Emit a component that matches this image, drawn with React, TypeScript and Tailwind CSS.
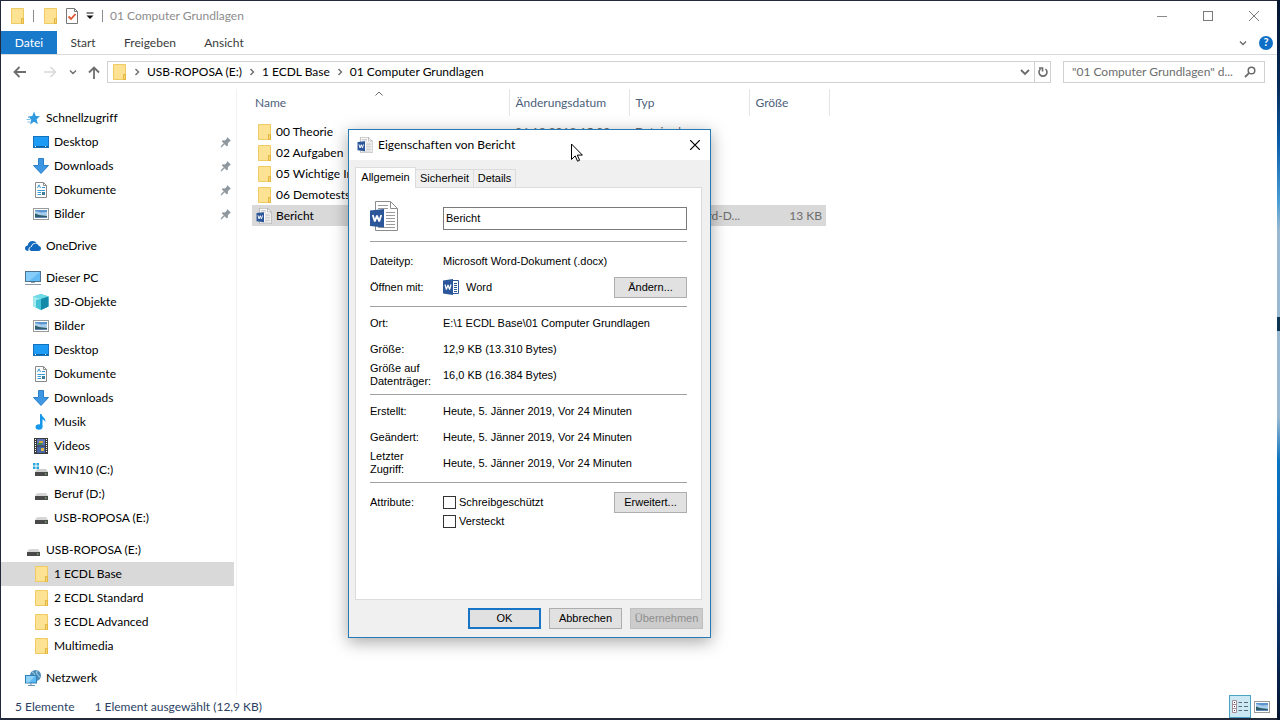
import { useState, type ReactNode } from 'react';

type IconName =
  | 'star' | 'desktop' | 'download' | 'document' | 'picture' | 'onedrive' | 'pc'
  | 'cube' | 'music' | 'video' | 'sysdrive' | 'drive' | 'folder' | 'network';

interface TreeItem {
  label: string;
  icon: IconName;
  child?: boolean;
  pinned?: boolean;
}

interface FileRow {
  name: string;
  date: string;
  type: string;
  size?: string;
  word?: boolean;
}

const treeGroups: TreeItem[][] = [
  [
    { label: 'Schnellzugriff', icon: 'star' },
    { label: 'Desktop', icon: 'desktop', child: true, pinned: true },
    { label: 'Downloads', icon: 'download', child: true, pinned: true },
    { label: 'Dokumente', icon: 'document', child: true, pinned: true },
    { label: 'Bilder', icon: 'picture', child: true, pinned: true },
  ],
  [{ label: 'OneDrive', icon: 'onedrive' }],
  [
    { label: 'Dieser PC', icon: 'pc' },
    { label: '3D-Objekte', icon: 'cube', child: true },
    { label: 'Bilder', icon: 'picture', child: true },
    { label: 'Desktop', icon: 'desktop', child: true },
    { label: 'Dokumente', icon: 'document', child: true },
    { label: 'Downloads', icon: 'download', child: true },
    { label: 'Musik', icon: 'music', child: true },
    { label: 'Videos', icon: 'video', child: true },
    { label: 'WIN10 (C:)', icon: 'sysdrive', child: true },
    { label: 'Beruf (D:)', icon: 'drive', child: true },
    { label: 'USB-ROPOSA (E:)', icon: 'drive', child: true },
  ],
  [
    { label: 'USB-ROPOSA (E:)', icon: 'drive' },
    { label: '1 ECDL Base', icon: 'folder', child: true },
    { label: '2 ECDL Standard', icon: 'folder', child: true },
    { label: '3 ECDL Advanced', icon: 'folder', child: true },
    { label: 'Multimedia', icon: 'folder', child: true },
  ],
  [{ label: 'Netzwerk', icon: 'network' }],
];

const files: FileRow[] = [
  { name: '00 Theorie', date: '26.12.2018 15:00', type: 'Dateiordner' },
  { name: '02 Aufgaben', date: '', type: '' },
  { name: '05 Wichtige In', date: '', type: '' },
  { name: '06 Demotests', date: '', type: '' },
  { name: 'Bericht', date: '', type: 'Microsoft Word-D...', size: '13 KB', word: true },
];

const iconShapes: Record<IconName, ReactNode> = {
  star: (
    <>
      <path d="M9 1.500 10.800 6 15 6.300l-3.400 3 1.300 5L9 11.800l-4 2.600 1.200-5L3 6.400 7.300 6z" fill="#2f9ae0" />
      <path d="M1.500 9.500h4M2.500 12h2.500M3 7.500h2" stroke="#7cc0ee" />
    </>
  ),
  desktop: (
    <>
      <rect x=".5" y="2.5" width="15" height="11" fill="#1e9bf5" stroke="#1573bd" />
      <path d="M1 12.5h14" stroke="#0d5fa5" />
      <path d="M2 12.5h2m8 0h2" stroke="#fff" strokeDasharray="1 1" />
    </>
  ),
  download: <path d="M5.5.5h5v7h5L8 15.5.5 7.5h5z" fill="#3d97e3" stroke="#2b7fc9" />,
  document: (
    <>
      <path d="M2.5.5h8l3 3v12h-11z" fill="#fff" stroke="#8a8a8a" />
      <path d="M10.5.5v3h3" fill="none" stroke="#8a8a8a" />
      <path d="M4.5 6 6 2.8 7.5 6" fill="none" stroke="#3b9bd6" />
      <path d="M9 5.5h3M4.5 8.5H12M4.5 10.5H8M4.5 12.5H8" stroke="#3b9bd6" />
      <path d="M9 10h3v3H9z" fill="#3a7f9c" />
    </>
  ),
  picture: (
    <>
      <rect x=".5" y="2.5" width="15" height="11" fill="#fff" stroke="#9a9a9a" />
      <path d="M2 4h12v8H2z" fill="#a9cdec" />
      <path d="M2 4h12v2L8 6.5 2 5z" fill="#5d95cf" />
      <path d="M2 7.5 6 9l8 1v2H2z" fill="#2d5d68" />
      <path d="M2 11h12v1H2z" fill="#5f87b5" />
    </>
  ),
  onedrive: (
    <>
      <path d="M0 10.5C0 8.7 1.2 7.7 2.7 7.6 2.9 5 5 3 7.6 3c1.7 0 3 .7 3.9 1.8C8.500 4.700 6.500 6.200 6 8.400c-2 .4-2.900 1.900-2.500 4.600C1.200 13 0 12 0 10.500z" fill="#1268bd" />
      <path d="M4.500 11.300c0-1.500 1-2.500 2.400-2.500.3-1.900 1.700-3.200 3.600-3.200 1.600 0 2.900 1 3.300 2.500 1.300.1 2.200 1 2.200 2.400 0 1.500-1 2.500-2.500 2.500H6.700c-1.300 0-2.200-.7-2.200-1.700z" fill="#1268bd" />
    </>
  ),
  pc: (
    <>
      <rect x=".5" y="1.500" width="15" height="10" fill="#62bbf5" stroke="#4d7390" />
      <path d="M1 2h14L4 11H1z" fill="#86cef9" />
      <path d="M6 12.500h4" stroke="#8aa1b3" />
      <path d="M0 14.500h16" stroke="#8b9aa8" />
    </>
  ),
  cube: (
    <>
      <path d="M8 0l7.500 2.500v10L8 16 .5 12.500v-10z" fill="#2fb7cf" />
      <path d="M8 0l7.500 2.500L8 5 .5 2.500z" fill="#6fdbe6" />
      <path d="M.5 2.500 8 5v11L.5 12.500z" fill="#a5ecee" />
      <path d="M3 6l5-1v11l-5-2.500z" fill="#45c3d6" />
      <path d="M8 5l7.500-2.500v10L8 16z" fill="#138aa8" />
    </>
  ),
  music: (
    <>
      <path d="M8.500 0c.2 3 4.500 3.700 4 8.500-.6-1.800-1.700-2.700-3-3V13H7V0z" fill="#1898ea" />
      <ellipse cx="6" cy="13" rx="3.500" ry="2.700" fill="#1898ea" />
    </>
  ),
  video: (
    <>
      <path d="M1 0h14v16H1z" fill="#3b3b3b" />
      <path d="M4 1h8v6.500H4z" fill="#5873b8" />
      <path d="M4 8.500h8V15H4z" fill="#4666a8" />
      <path d="M6 3h4v2H6z" fill="#d3a83c" />
      <path d="M5 5h4v2H5z" fill="#3e8a55" />
      <path d="M8 10h3v3H8z" fill="#d9b845" />
      <path d="M2.500 1v14M13.500 1v14" stroke="#fff" strokeDasharray="1 1" />
    </>
  ),
  sysdrive: (
    <>
      <path d="M0 1h2.500v2.500H0zM3.500 1H6v2.500H3.500zM0 4.500h2.500V7H0zM3.500 4.500H6V7H3.500z" fill="#2aa6dd" />
      <path d="M4 7h9l2 3H2z" fill="#cfcfcf" />
      <rect x="2" y="10" width="13" height="4" fill="#4a4a4a" />
      <path d="M12 12h1.500" stroke="#7fe08a" />
    </>
  ),
  drive: (
    <>
      <path d="M4 7h9l2 3H2z" fill="#d6d6d6" />
      <rect x="2" y="10" width="13" height="4" fill="#4a4a4a" />
      <path d="M12 12h1.500" stroke="#7fe08a" />
    </>
  ),
  folder: (
    <>
      <path d="M2.500.5h12v15h-12z" fill="#fde293" stroke="#eecb63" />
      <path d="M12.500 10.500h2v5h-2z" fill="#fbd774" stroke="#e3b640" />
    </>
  ),
  network: (
    <>
      <circle cx="10.500" cy="5.500" r="5.500" fill="#4d8fb8" />
      <path d="M7 2c2 .5 3 2 2 4M12 1c-1 3 1 5 3 6" fill="none" stroke="#b5dcef" />
      <rect x=".5" y="5.500" width="11" height="7.500" fill="#5cb8f0" stroke="#2f80b8" />
      <path d="M1 6h9l-6 6.500H1z" fill="#8fd2f8" />
      <path d="M3 15.500h7M6 13v2" stroke="#6a93ad" />
    </>
  ),
};

function Icon({ name }: { name: IconName }) {
  return (
    <svg viewBox="0 0 16 16" className="size-4 shrink-0" aria-hidden="true">
      {iconShapes[name]}
    </svg>
  );
}

function WordDocIcon({ className }: { className: string }) {
  return (
    <svg viewBox="0 0 28 30" className={className} aria-hidden="true">
      <path d="M5.500.5h15l7 7v22h-22z" fill="#fff" stroke="#8c8c8c" />
      <path d="M20.500.5v7h7" fill="none" stroke="#8c8c8c" />
      <path d="M8 4.500h10M8 7.500h10M16 11.500h9M16 14.500h9M16 17.500h9M16 20.500h9M16 23.500h9M8 26.500h17" stroke="#9b9b9b" />
      <path d="M0 9.500 14 8v18.500L0 25z" fill="#2b579a" />
      <path d="M2.800 14 4.800 20.500 7 14.500 9.200 20.500 11.200 14" fill="none" stroke="#fff" strokeWidth="1.800" strokeLinejoin="bevel" />
    </svg>
  );
}

function WordAppIcon() {
  return (
    <svg viewBox="0 0 16 16" className="size-4 shrink-0" aria-hidden="true">
      <path d="M8.500 1.500h7v13h-7z" fill="#fff" stroke="#2b579a" />
      <path d="M11 4.500h3M11 6.500h3M11 8.500h3M11 10.500h3M11 12.500h3" stroke="#2b579a" />
      <path d="M0 1.500 10 0v16L0 14.500z" fill="#2b579a" />
      <path d="M2 5.500 3.400 10.500 5 6 6.600 10.500 8 5.500" fill="none" stroke="#fff" strokeWidth="1.200" strokeLinejoin="bevel" />
    </svg>
  );
}

function PinIcon() {
  return (
    <svg viewBox="0 0 12 12" className="size-3 shrink-0" aria-hidden="true">
      <path d="M7.200 1 11 4.800l-1.200.4-2 2 .1 2.300-1 .9L1.800 5.300l.9-1 2.300.1 1.800-2z" fill="#8f979e" />
      <path d="M4.500 7.500 1 11" stroke="#8f979e" strokeWidth="1.300" />
    </svg>
  );
}

function Chevron({ dir = 'right' }: { dir?: 'right' | 'down' }) {
  return (
    <svg viewBox="0 0 8 8" className="size-2 shrink-0" aria-hidden="true">
      <path
        d={dir === 'right' ? 'M2.500 1 5.500 4 2.500 7' : 'M1 2.500 4 5.500 7 2.500'}
        fill="none"
        stroke="#6b6b6b"
        strokeWidth="1.400"
      />
    </svg>
  );
}

function TitleBar() {
  return (
    <header className="flex h-[30px] items-center">
      <div className="flex flex-1 items-center pl-2">
        <Icon name="folder" />
        <span className="ml-2 h-3 w-px bg-[#8a8a8a]" />
        <button className="ml-2" aria-label="Neuer Ordner">
          <Icon name="folder" />
        </button>
        <button className="ml-2" aria-label="Eigenschaften">
          <svg viewBox="0 0 12 16" className="h-4 w-3">
            <path d="M.5.500h8l3 3v12H.500z" fill="#fff" stroke="#777" />
            <path d="M8.500.5v3h3" fill="none" stroke="#777" />
            <path d="M2.500 8.500 5 11l4.500-5" fill="none" stroke="#e2542c" strokeWidth="1.800" />
          </svg>
        </button>
        <button className="ml-2" aria-label="Symbolleiste anpassen">
          <svg viewBox="0 0 8 8" className="size-2">
            <path d="M.5 1h7" stroke="#111" />
            <path d="M.5 3.500h7L4 7z" fill="#111" />
          </svg>
        </button>
        <span className="ml-2 h-3 w-px bg-[#8a8a8a]" />
        <h1 className="ml-[7px] text-[#8c8c8c]">01 Computer Grundlagen</h1>
      </div>
      <button className="flex h-full w-[46px] items-center justify-center" aria-label="Minimieren">
        <span className="h-px w-2.5 bg-[#8a8a8a]" />
      </button>
      <button className="flex h-full w-[46px] items-center justify-center" aria-label="Maximieren">
        <span className="size-2.5 border border-[#7a7a7a]" />
      </button>
      <button className="flex h-full w-[46px] items-center justify-center" aria-label="Schließen">
        <svg viewBox="0 0 10 10" className="size-2.5">
          <path d="M0 0l10 10M10 0 0 10" stroke="#7a7a7a" />
        </svg>
      </button>
    </header>
  );
}

function Ribbon() {
  return (
    <div className="flex h-6 items-stretch border-b border-[#dadbdc] text-[#3b3b3b]">
      <button className="w-14 bg-[#1979ca] text-white">Datei</button>
      <button className="w-[52px]">Start</button>
      <button className="w-[82px]">Freigeben</button>
      <button className="w-[66px]">Ansicht</button>
      <div className="ml-auto flex items-center gap-3 pr-1">
        <button aria-label="Menüband erweitern">
          <Chevron dir="down" />
        </button>
        <button
          aria-label="Hilfe"
          className="flex size-3.5 items-center justify-center rounded-full bg-[#0f6fc6] text-[11px] font-bold text-white"
        >
          ?
        </button>
      </div>
    </div>
  );
}

function AddressBar() {
  const crumbs = ['USB-ROPOSA (E:)', '1 ECDL Base', '01 Computer Grundlagen'];
  return (
    <div className="flex h-[34px] items-center pr-3 pl-3">
      <div className="flex w-[94px] items-center">
        <button aria-label="Zurück">
          <svg viewBox="0 0 14 12" className="h-3 w-3.5" fill="none" stroke="#6e6e6e" strokeWidth="1.800">
            <path d="M13 6H2M6.500 1 1.500 6l5 5" />
          </svg>
        </button>
        <button aria-label="Vorwärts" className="ml-4" disabled>
          <svg viewBox="0 0 14 12" className="h-3 w-3.5" fill="none" stroke="#d9d9d9" strokeWidth="1.600">
            <path d="M1 6h11M7.500 1l5 5-5 5" />
          </svg>
        </button>
        <button aria-label="Zuletzt besucht" className="ml-3">
          <Chevron dir="down" />
        </button>
        <button aria-label="Nach oben" className="ml-[11px]">
          <svg viewBox="0 0 12 13" className="h-[13px] w-3" fill="none" stroke="#6e6e6e" strokeWidth="1.800">
            <path d="M6 13V2M1 6.500l5-5 5 5" />
          </svg>
        </button>
      </div>
      <div className="flex h-[22px] flex-1 items-center border border-[#d0d0d0] pl-[3px]">
        <Icon name="folder" />
        {crumbs.map(crumb => (
          <span key={crumb} className="flex items-center">
            <span className="flex w-5 justify-center">
              <Chevron />
            </span>
            <button>{crumb}</button>
          </span>
        ))}
        <button className="mr-1 ml-auto" aria-label="Vorherige Orte">
          <svg viewBox="0 0 10 8" className="h-2 w-2.5">
            <path d="M1 2l4 4 4-4" fill="none" stroke="#6b6b6b" strokeWidth="1.800" />
          </svg>
        </button>
        <button className="flex h-full w-4 items-center justify-center border-l border-[#d0d0d0]" aria-label="Aktualisieren">
          <svg viewBox="0 0 12 12" className="size-3">
            <path d="M8.500 3A4 4 0 1 1 3.500 3M2 2h3.500v3.500" fill="none" stroke="#6b6b6b" strokeWidth="1.600" />
          </svg>
        </button>
      </div>
      <label className="ml-3 flex h-[22px] w-[202px] items-center border border-[#d0d0d0] pr-2 pl-2">
        <input
          type="text"
          aria-label="Durchsuchen"
          placeholder={'"01 Computer Grundlagen" d...'}
          className="min-w-0 flex-1 outline-none placeholder:text-[#6d6d6d]"
        />
        <svg viewBox="0 0 12 12" className="size-3 shrink-0" aria-hidden="true">
          <circle cx="7.500" cy="4.500" r="3.300" fill="none" stroke="#6b6b6b" strokeWidth="1.500" />
          <path d="M5.200 6.800 1 11" stroke="#6b6b6b" strokeWidth="1.800" />
        </svg>
      </label>
    </div>
  );
}

function Sidebar() {
  const [active, setActive] = useState('1 ECDL Base');
  return (
    <nav className="flex w-[236px] shrink-0 flex-col gap-2 border-r border-[#f2f2f2] pt-[17px] pr-0.5">
      {treeGroups.map((group, g) => (
        <ul key={g}>
          {group.map(item => (
            <li key={item.label}>
              <button
                onClick={() => setActive(item.label)}
                className={`flex h-6 w-full items-center gap-[5px] pr-0.5 text-left ${item.child ? 'pl-8' : 'pl-6'} ${
                  active === item.label ? 'bg-[#d9d9d9]' : ''
                }`}
              >
                <Icon name={item.icon} />
                <span className="flex-1">{item.label}</span>
                {item.pinned && <PinIcon />}
              </button>
            </li>
          ))}
        </ul>
      ))}
    </nav>
  );
}

function FileList() {
  return (
    <main className="flex-1 pl-[15px]">
      <table className="w-[577px] table-fixed">
        <colgroup>
          <col className="w-[257px]" />
          <col className="w-[120px]" />
          <col className="w-[120px]" />
          <col className="w-20" />
        </colgroup>
        <thead className="text-left text-[#4c607a]">
          <tr className="h-[27px]">
            <th className="relative border-r border-[#e5e5e5] pl-[3px] font-normal">
              Name
              <svg viewBox="0 0 8 5" className="absolute top-0.5 left-[123px] h-[5px] w-2" aria-hidden="true">
                <path d="M.5 4.500 4 1l3.500 3.500" fill="none" stroke="#6b6b6b" />
              </svg>
            </th>
            <th className="border-r border-[#e5e5e5] pl-1.5 font-normal">Änderungsdatum</th>
            <th className="border-r border-[#e5e5e5] pl-1.5 font-normal">Typ</th>
            <th className="border-r border-[#e5e5e5] pl-1.5 font-normal">Größe</th>
          </tr>
          <tr className="h-[5px]" />
        </thead>
        <tbody>
          {files.map(file => {
            const bg = file.word ? 'bg-[#d9d9d9]' : '';
            return (
              <tr key={file.name} className="h-[21px] whitespace-nowrap">
                <td className={`pl-1 ${bg}`}>
                  <span className="flex items-center gap-1">
                    {file.word ? <WordDocIcon className="size-4 shrink-0" /> : <Icon name="folder" />}
                    {file.name}
                  </span>
                </td>
                <td className={`pl-1.5 text-[#6d6d6d] ${bg}`}>{file.date}</td>
                <td className={`pl-1.5 text-[#6d6d6d] ${bg}`}>{file.type}</td>
                <td className="pr-[3px] text-right text-[#6d6d6d]">
                  <span className={`block h-[21px] pr-1 leading-[21px] ${bg}`}>{file.size}</span>
                </td>
              </tr>
            );
          })}
        </tbody>
      </table>
    </main>
  );
}

function StatusBar() {
  return (
    <footer className="flex h-[23px] items-center pl-[14px] text-[#2b3f63]">
      <span>5 Elemente</span>
      <span className="ml-5">1 Element ausgewählt (12,9 KB)</span>
      <button
        aria-label="Details"
        className="ml-auto flex h-full w-[22px] items-center justify-center border border-[#4aa3c0] bg-[#cce8f3]"
      >
        <svg viewBox="0 0 16 13" className="h-[13px] w-4">
          <path d="M.5.500h4v12h-4zM.5 4.500h4M.5 8.500h4" fill="#fff" stroke="#a58a98" />
          <path d="M2 2.500h1M2 6.500h1M2 10.500h1" stroke="#444" />
          <path d="M6.500 2.500H10M12 2.500h4M6.500 6.500H10M12 6.500h4M6.500 10.500H10M12 10.500h4" stroke="#5b6b75" />
        </svg>
      </button>
      <button aria-label="Große Symbole" className="mr-[7px] ml-[3px]">
        <Icon name="picture" />
      </button>
    </footer>
  );
}

function DialogButton({ children, variant = 'normal' }: { children: ReactNode; variant?: 'normal' | 'primary' | 'disabled' }) {
  const styles = {
    normal: 'border border-[#adadad] bg-[#e1e1e1]',
    primary: 'border-2 border-[#1874c4] bg-[#e1e1e1]',
    disabled: 'border border-[#bfbfbf] bg-[#cccccc] text-[#8e8e8e]',
  };
  return (
    <button
      disabled={variant === 'disabled'}
      className={`flex h-[21px] w-[73px] shrink-0 items-center justify-center ${styles[variant]}`}
    >
      {children}
    </button>
  );
}

function PropertyRow({ label, children }: { label: ReactNode; children: ReactNode }) {
  return (
    <div className="flex h-[26px] items-center">
      <dt className="w-[73px] shrink-0 leading-[13px]">{label}</dt>
      <dd className="flex flex-1 items-center">{children}</dd>
    </div>
  );
}

function PropertiesDialog() {
  const [name, setName] = useState('Bericht');
  return (
    <section
      role="dialog"
      aria-labelledby="dialog-title"
      className="absolute top-[129px] left-[348px] w-[363px] border border-[#2579b5] bg-[#f0f0f0] font-['Liberation_Sans',Arial,sans-serif] text-[11px] leading-[13px] shadow-[0_4px_16px_rgba(0,0,0,0.35)]"
    >
      <div className="flex h-[30px] items-center bg-white pr-2.5 pl-2 font-[Lato,'Segoe_UI',sans-serif] text-xs">
        <WordDocIcon className="size-4" />
        <h2 id="dialog-title" className="ml-[5px] flex-1">Eigenschaften von Bericht</h2>
        <button aria-label="Schließen">
          <svg viewBox="0 0 10 10" className="size-2.5">
            <path d="M0 0l10 10M10 0 0 10" stroke="#000" strokeWidth="1.200" />
          </svg>
        </button>
      </div>

      <div className="pt-[7px] pr-2 pl-1.5">
        <div role="tablist" className="flex h-5 items-end">
          <button role="tab" aria-selected="true" className="-mb-px h-[21px] w-[61px] border border-b-0 border-[#dcdcdc] bg-white pb-0.5">
            Allgemein
          </button>
          <button role="tab" aria-selected="false" className="h-[18px] w-[58px] border-t border-r border-[#dcdcdc]">
            Sicherheit
          </button>
          <button role="tab" aria-selected="false" className="h-[18px] w-[42px] border-t border-r border-[#dcdcdc]">
            Details
          </button>
        </div>

        <div role="tabpanel" className="border border-[#dcdcdc] bg-white px-[14px]">
          <div className="flex h-[53px] items-start pt-[13px]">
            <WordDocIcon className="mr-[45px] h-[30px] w-7" />
            <input
              type="text"
              aria-label="Dateiname"
              value={name}
              onChange={e => setName(e.target.value)}
              className="mt-1.5 h-[23px] min-w-0 flex-1 border border-[#7a7a7a] px-0.5 pb-0.5 outline-none"
            />
          </div>

          <dl className="border-t border-[#a0a0a0] py-1.5">
            <PropertyRow label="Dateityp:">Microsoft Word-Dokument (.docx)</PropertyRow>
            <PropertyRow label="Öffnen mit:">
              <WordAppIcon />
              <span className="ml-[7px] flex-1">Word</span>
              <DialogButton>Ändern...</DialogButton>
            </PropertyRow>
          </dl>

          <dl className="border-t border-[#a0a0a0] pt-[3px] pb-1.5">
            <PropertyRow label="Ort:">E:\1 ECDL Base\01 Computer Grundlagen</PropertyRow>
            <PropertyRow label="Größe:">12,9 KB (13.310 Bytes)</PropertyRow>
            <PropertyRow label={<>Größe auf<br />Datenträger:</>}>16,0 KB (16.384 Bytes)</PropertyRow>
          </dl>

          <dl className="border-t border-[#a0a0a0] pt-[3px] pb-1.5">
            <PropertyRow label="Erstellt:">Heute, 5. Jänner 2019, Vor 24 Minuten</PropertyRow>
            <PropertyRow label="Geändert:">Heute, 5. Jänner 2019, Vor 24 Minuten</PropertyRow>
            <PropertyRow label={<>Letzter<br />Zugriff:</>}>Heute, 5. Jänner 2019, Vor 24 Minuten</PropertyRow>
          </dl>

          <div className="flex items-start border-t border-[#a0a0a0] pt-[9px] pb-[68px]">
            <span className="w-[73px] shrink-0 leading-5">Attribute:</span>
            <div className="flex-1 pt-px">
              <label className="flex h-[19px] items-center gap-[3px]">
                <input type="checkbox" className="size-[13px] appearance-none border border-[#333] bg-white checked:bg-[#333]" />
                Schreibgeschützt
              </label>
              <label className="flex h-[19px] items-center gap-[3px]">
                <input type="checkbox" className="size-[13px] appearance-none border border-[#333] bg-white checked:bg-[#333]" />
                Versteckt
              </label>
            </div>
            <DialogButton>Erweitert...</DialogButton>
          </div>
        </div>
      </div>

      <div className="flex justify-end gap-2 pt-2 pr-[7px] pb-2">
        <DialogButton variant="primary">OK</DialogButton>
        <DialogButton>Abbrechen</DialogButton>
        <DialogButton variant="disabled">Übernehmen</DialogButton>
      </div>
    </section>
  );
}

function Cursor() {
  return (
    <svg viewBox="0 0 12 19" className="pointer-events-none absolute top-[143px] left-[571px] h-[19px] w-3" aria-hidden="true">
      <path d="M.5 1v15.500l3.700-3.600 2.300 5.300 2.100-.9-2.300-5.200h5.100z" fill="#fff" stroke="#000" />
    </svg>
  );
}

export default function App() {
  return (
    <div className="relative flex min-h-screen bg-[linear-gradient(#04142e,#062a55_12%,#0a5fae_20%,#4a9ed6_28%,#9ab8cf_32%,#9ab8cf_44%,#0d3550_44%,#0d3550_46%,#9ab8cf_46%,#9ab8cf_58%,#0a74c0_64%,#0b66b4_75%,#0b3a78_83%,#04142e)] font-[Lato,'Segoe_UI',sans-serif] text-xs text-black [font-variant-ligatures:none]">
      <div className="flex flex-1 flex-col border-t border-b-2 border-l border-[#23283a] bg-white">
        <TitleBar />
        <Ribbon />
        <AddressBar />
        <div className="flex flex-1">
          <Sidebar />
          <FileList />
        </div>
        <StatusBar />
      </div>
      <div className="w-[3px]" />
      <PropertiesDialog />
      <Cursor />
    </div>
  );
}
